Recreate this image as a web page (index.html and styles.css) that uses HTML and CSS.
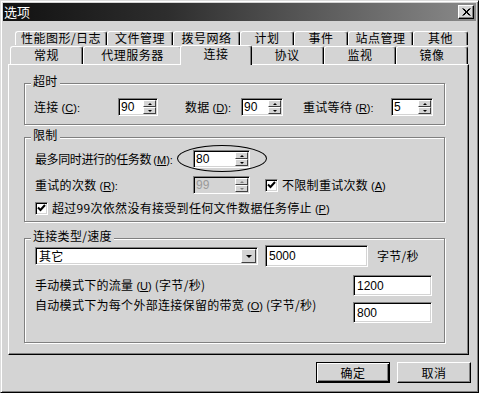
FILE: index.html
```html
<!DOCTYPE html>
<html>
<head>
<meta charset="utf-8">
<title>选项</title>
<link rel="stylesheet" href="styles.css">
</head>
<body>
<div class="dialog">
  <div class="titlebar">
    <span class="title">选项</span>
    <span class="close"><svg width="9" height="8" viewBox="0 0 9 8"><path d="M0.5 0.5L7.5 7.5M1.5 0.5L8.5 7.5M7.5 0.5L0.5 7.5M8.5 0.5L1.5 7.5" stroke="#000" stroke-width="1" fill="none"/></svg></span>
  </div>

  <div class="tabrow back">
    <div class="tab b1">性能图形/日志</div>
    <div class="tab b2">文件管理</div>
    <div class="tab b3">拨号网络</div>
    <div class="tab b4">计划</div>
    <div class="tab b5">事件</div>
    <div class="tab b6">站点管理</div>
    <div class="tab b7">其他</div>
  </div>
  <div class="tabrow front">
    <div class="tab f1">常规</div>
    <div class="tab f2">代理服务器</div>
    <div class="tab f3 active">连接</div>
    <div class="tab f4">协议</div>
    <div class="tab f5">监视</div>
    <div class="tab f6">镜像</div>
  </div>

  <div class="panel">
    <div class="group g1">
      <span class="legend">超时</span>
      <div class="row r-timeout">
        <span class="lbl l-conn">连接 <span class="mn">(<u>C</u>):</span></span>
        <div class="spin s40"><span class="val">90</span><span class="arrows"><i class="up"></i><i class="dn"></i></span></div>
        <span class="lbl l-data">数据 <span class="mn">(<u>D</u>):</span></span>
        <div class="spin s42"><span class="val">90</span><span class="arrows"><i class="up"></i><i class="dn"></i></span></div>
        <span class="lbl l-retry">重试等待 <span class="mn">(<u>R</u>):</span></span>
        <div class="spin s42"><span class="val">5</span><span class="arrows"><i class="up"></i><i class="dn"></i></span></div>
      </div>
    </div>

    <div class="group g2">
      <span class="legend">限制</span>
      <div class="row r-max">
        <span class="lbl l-wide l-tight">最多同时进行的任务数 <span class="mn">(<u>M</u>):</span></span>
        <div class="spin s57"><span class="val">80</span><span class="arrows"><i class="up"></i><i class="dn"></i></span></div>
        <span class="ellipse"></span>
      </div>
      <div class="row r-retries">
        <span class="lbl l-wide">重试的次数 <span class="mn">(<u>R</u>):</span></span>
        <div class="spin s57 disabled"><span class="val">99</span><span class="arrows"><i class="up"></i><i class="dn"></i></span></div>
        <span class="check c-unl"><svg width="9" height="8" viewBox="0 0 9 8"><path d="M1 3.5L3.5 6L8 1" stroke="#000" stroke-width="2" fill="none"/></svg></span>
        <span class="clbl">不限制重试次数 <span class="mn">(<u>A</u>)</span></span>
      </div>
      <div class="row r-stop">
        <span class="check"><svg width="9" height="8" viewBox="0 0 9 8"><path d="M1 3.5L3.5 6L8 1" stroke="#000" stroke-width="2" fill="none"/></svg></span>
        <span class="clbl">超过99次依然没有接受到任何文件数据任务停止 <span class="mn">(<u>P</u>)</span></span>
      </div>
    </div>

    <div class="group g3">
      <span class="legend">连接类型/速度</span>
      <div class="row r-type">
        <div class="combo"><span class="val">其它</span><span class="dd"><i></i></span></div>
        <div class="edit e-speed">5000</div>
        <span class="lbl l-unit">字节/秒</span>
      </div>
      <div class="row r-manual">
        <span class="lbl">手动模式下的流量 <span class="mn">(<u>U</u>)</span> (字节/秒)</span>
        <div class="edit e-small">1200</div>
      </div>
      <div class="row r-auto">
        <span class="lbl l-auto">自动模式下为每个外部连接保留的带宽 <span class="mn">(<u>O</u>)</span> (字节/秒)</span>
        <div class="edit e-small">800</div>
      </div>
    </div>
  </div>

  <div class="buttons">
    <div class="btn default">确定</div>
    <div class="btn">取消</div>
  </div>
</div>
</body>
</html>
```

FILE: styles.css
```css
* { box-sizing: border-box; margin: 0; padding: 0; }

body {
  margin: 0;
  width: 479px;
  height: 393px;
  overflow: hidden;
  background: #d4d4d4;
  font-family: "Noto Sans CJK SC", "Liberation Sans", sans-serif;
  font-size: 12px;
  color: #000;
}

.dialog {
  width: 479px;
  height: 393px;
  padding: 2px;
  background: #d4d4d4;
  border: 1px solid;
  border-color: #dcdcdc #000 #000 #dcdcdc;
  box-shadow: inset 1px 1px #fff, inset -1px -1px #808080;
}

.titlebar {
  height: 18px;
  display: flex;
  align-items: center;
  justify-content: space-between;
  padding-left: 1px;
  background: linear-gradient(to right, #111, #2e2e2e 35%, #8a8a8a);
  color: #fff;
}
.title { font-size: 13px; line-height: 18px; }
.close {
  width: 16px;
  height: 14px;
  margin-right: 2px;
  display: flex;
  align-items: center;
  justify-content: center;
  background: #d4d4d4;
  border: 1px solid;
  border-color: #fff #000 #000 #fff;
  box-shadow: inset -1px -1px #808080;
}

/* tabs */
.tabrow { display: flex; align-items: flex-start; }
.back { margin: 10px 0 0 12px; height: 15px; }
.front { margin-left: 7px; height: 18px; }

.tab {
  flex: none;
  height: 100%;
  text-align: center;
  background: #d4d4d4;
  border-top: 1px solid #fff;
  border-left: 1px solid #fff;
  border-right: 1px solid #000;
  border-radius: 3px 3px 0 0;
  box-shadow: inset -1px 0 #808080;
  letter-spacing: 0.5px;
}
.back .tab { height: 14px; line-height: 12px; }
.front .tab { line-height: 16px; }

.b1 { width: 92px; }
.b2 { width: 66px; }
.b3 { width: 67px; }
.b4 { width: 54px; }
.b5 { width: 54px; }
.b6 { width: 65px; }
.b7 { width: 55px; }

.f1 { width: 73px; }
.f2 { width: 99px; }
.f3 { width: 72px; }
.f4 { width: 74px; }
.f5 { width: 72px; }
.f6 { width: 72px; }

.tab.active {
  height: 20px;
  margin: -1px -2px 0 -2px;
  z-index: 1;
}

/* panel */
.panel {
  width: 461px;
  height: 291px;
  margin-left: 5px;
  padding-top: 18px;
  background: #d4d4d4;
  border: 1px solid;
  border-color: #fff #000 #000 #fff;
  box-shadow: inset -1px -1px #808080;
}

.group {
  width: 421px;
  margin-left: 15px;
  border: 1px solid #808080;
  box-shadow: inset 1px 1px #fff, 1px 1px #fff;
}
.g1 { height: 42px; }
.g2 { height: 85px; margin-top: 12px; }
.g3 { height: 105px; margin-top: 16px; }

.legend {
  display: block;
  width: fit-content;
  height: 16px;
  line-height: 16px;
  margin: -11px 0 0 6px;
  padding: 0 2px;
  background: #d4d4d4;
  letter-spacing: 0.3px;
}

.row { display: flex; align-items: center; padding-left: 9px; }
.lbl { flex: none; line-height: 16px; letter-spacing: 0.3px; white-space: nowrap; }
.clbl { line-height: 16px; letter-spacing: 0.3px; white-space: nowrap; margin-left: 4px; }
.mn {
  font-family: "Liberation Sans", sans-serif;
  font-size: 11px;
  letter-spacing: 0;
}
.l-tight { letter-spacing: -0.4px; }
u { text-decoration: underline; text-underline-offset: 1px; }

.r-timeout { margin-top: 9px; height: 18px; }
.l-conn { width: 84px; }
.l-data { width: 56px; margin-left: 27px; }
.l-retry { width: 88px; margin-left: 20px; }

/* spinner */
.spin {
  flex: none;
  height: 18px;
  display: flex;
  align-items: stretch;
  background: #fff;
  border: 1px solid;
  border-color: #808080 #fff #fff #808080;
  box-shadow: inset 1px 1px #000, inset -1px -1px #d4d4d4;
  padding: 1px;
}
.s40 { width: 40px; }
.s42 { width: 42px; }
.s57 { width: 57px; }
.spin .val {
  flex: 1;
  font-family: "Liberation Sans", sans-serif;
  font-size: 12px;
  line-height: 14px;
  padding-left: 1px;
}
.arrows {
  width: 13px;
  display: flex;
  flex-direction: column;
}
.arrows i {
  flex: 1;
  display: flex;
  align-items: center;
  justify-content: center;
  background: #d4d4d4;
  border: 1px solid;
  border-color: #fff #404040 #404040 #fff;
}
.arrows .up::after {
  content: "";
  border-left: 2px solid transparent;
  border-right: 2px solid transparent;
  border-bottom: 2px solid #000;
}
.arrows .dn::after {
  content: "";
  border-left: 2px solid transparent;
  border-right: 2px solid transparent;
  border-top: 2px solid #000;
}
.spin.disabled { background: #d4d4d4; }
.spin.disabled .val { color: #9a9a9a; }
.spin.disabled .arrows i::after { border-top-color: #808080; border-bottom-color: #808080; }

/* group 2 */
.r-max { margin-top: 7px; height: 18px; position: relative; padding-left: 10px; }
.r-retries { margin-top: 8px; height: 18px; padding-left: 10px; }
.r-stop { margin-top: 6px; height: 16px; padding-left: 10px; }
.l-wide { width: 158px; }

.ellipse {
  position: absolute;
  left: 152px;
  top: -5px;
  width: 90px;
  height: 27px;
  border: 1px solid #000;
  border-radius: 50%;
}

.check {
  flex: none;
  width: 13px;
  height: 13px;
  display: flex;
  align-items: center;
  justify-content: center;
  background: #fff;
  border: 1px solid;
  border-color: #808080 #fff #fff #808080;
  box-shadow: inset 1px 1px #000, inset -1px -1px #d4d4d4;
}
.c-unl { margin-left: 15px; }

/* group 3 */
.r-type { margin-top: 1px; height: 22px; padding-left: 10px; }
.r-manual { margin-top: 8px; height: 21px; padding-left: 10px; padding-right: 12px; justify-content: space-between; }
.r-auto { margin-top: 6px; height: 21px; padding-left: 10px; padding-right: 12px; justify-content: space-between; align-items: flex-start; }
.l-auto { margin-top: -5px; }

.combo {
  flex: none;
  width: 223px;
  height: 18px;
  display: flex;
  background: #fff;
  border: 1px solid;
  border-color: #808080 #fff #fff #808080;
  box-shadow: inset 1px 1px #000, inset -1px -1px #d4d4d4;
  padding: 1px;
}
.combo .val { flex: 1; line-height: 14px; padding-left: 2px; letter-spacing: 0.3px; }
.combo .dd {
  width: 15px;
  display: flex;
  align-items: center;
  justify-content: center;
  background: #d4d4d4;
  border: 1px solid;
  border-color: #fff #404040 #404040 #fff;
}
.combo .dd i {
  border-left: 3px solid transparent;
  border-right: 3px solid transparent;
  border-top: 3px solid #000;
}

.edit {
  flex: none;
  background: #fff;
  border: 1px solid;
  border-color: #808080 #fff #fff #808080;
  box-shadow: inset 1px 1px #000, inset -1px -1px #d4d4d4;
  font-family: "Liberation Sans", sans-serif;
  font-size: 12px;
  padding-left: 3px;
  display: flex;
  align-items: center;
}
.e-speed { width: 103px; height: 22px; margin-left: 7px; }
.e-small { width: 79px; height: 21px; }
.l-unit { margin-left: 9px; }

/* buttons */
.buttons {
  display: flex;
  justify-content: flex-end;
  gap: 7px;
  margin: 7px 5px 0 0;
}
.btn {
  width: 74px;
  height: 21px;
  display: flex;
  align-items: center;
  justify-content: center;
  letter-spacing: 0.5px;
  background: #d4d4d4;
  border: 1px solid;
  border-color: #fff #000 #000 #fff;
  box-shadow: inset -1px -1px #808080;
}
.btn.default {
  border-color: #000;
  box-shadow: inset 1px 1px #fff, inset -1px -1px #000, inset -2px -2px #808080;
}
```
